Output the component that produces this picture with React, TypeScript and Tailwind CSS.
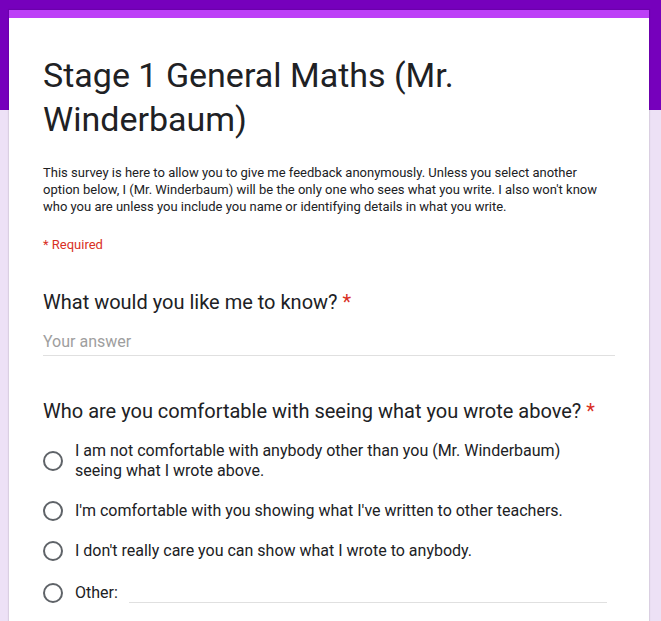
const options = [
  "I am not comfortable with anybody other than you (Mr. Winderbaum) seeing what I wrote above.",
  "I'm comfortable with you showing what I've written to other teachers.",
  "I don't really care you can show what I wrote to anybody.",
];

function Radio() {
  return <span className="block h-5 w-5 shrink-0 rounded-full border-2 border-[#5f6368]" />;
}

export default function App() {
  return (
    <div className="min-h-screen bg-[linear-gradient(to_bottom,#7600bc_110px,#ede1f6_110px)] pt-[10px] font-['Roboto',sans-serif] text-[#202124]">
      <div className="mx-[9px] w-[640px] overflow-hidden bg-white shadow-[0_0_1px_1px_rgba(0,0,0,0.08)]">
        <div className="h-2 bg-[#bd40f7]" />
        <div className="px-[34px] pb-10 pt-[35px]">
          <h1 className="text-[34px] leading-[44px]">Stage 1 General Maths (Mr. Winderbaum)</h1>
          <p className="mt-[23px] text-[13px] leading-[17px]">
            This survey is here to allow you to give me feedback anonymously. Unless you select another option
            below, I (Mr. Winderbaum) will be the only one who sees what you write. I also won't know who you are
            unless you include you name or identifying details in what you write.
          </p>
          <p className="mt-[21px] text-[13px] leading-[17px] text-[#d93025]">* Required</p>

          <h2 className="mt-[37px] text-[20px] leading-6">
            What would you like me to know? <span className="text-[#d93025]">*</span>
          </h2>
          <div className="mt-[16px] h-[26px] border-b border-[#e0e0e0] text-[16px] leading-6 text-[#9e9e9e]">
            Your answer
          </div>

          <h2 className="mt-[43px] text-[20px] leading-6">
            Who are you comfortable with seeing what you wrote above? <span className="text-[#d93025]">*</span>
          </h2>
          <div className="mt-[18px] flex flex-col gap-5">
            {options.map((o) => (
              <label key={o} className="flex items-center gap-3 text-[16px] leading-5">
                <Radio />
                <span className="max-w-[510px]">{o}</span>
              </label>
            ))}
            <label className="mt-px flex items-center gap-3 text-[16px] leading-5">
              <Radio />
              <span>Other:</span>
              <span className="ml-[-1px] mr-2 mt-5 flex-1 border-b border-[#e0e0e0]" />
            </label>
          </div>
        </div>
      </div>
    </div>
  );
}
